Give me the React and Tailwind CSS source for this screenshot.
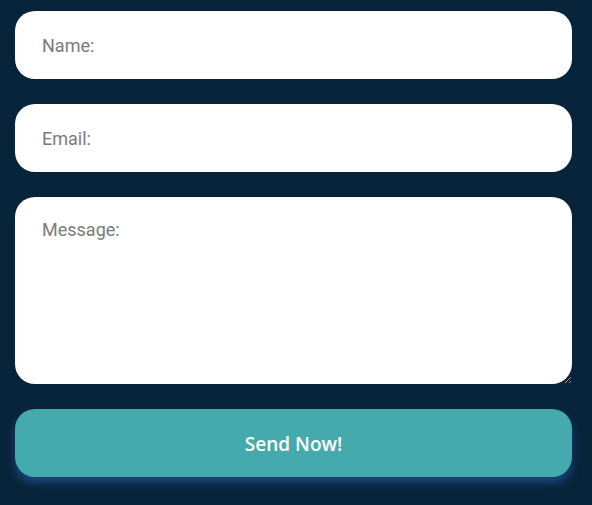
export default function App() {
  return (
    <div className="min-h-[505px] w-full bg-[#08243a] pl-[15px] pr-[20px] pt-[11px] pb-[28px]" style={{ fontFamily: 'Roboto, "Liberation Sans", sans-serif' }}>
      <form className="flex flex-col gap-[25px]" onSubmit={(e) => e.preventDefault()}>
        <input
          type="text"
          placeholder="Name:"
          className="h-[68px] w-full rounded-[20px] bg-white pl-[27px] pr-4 text-[18px] text-gray-700 placeholder:text-[#7a7a7a] outline-none"
        />
        <input
          type="email"
          placeholder="Email:"
          className="h-[68px] w-full rounded-[20px] bg-white pl-[27px] pr-4 text-[18px] text-gray-700 placeholder:text-[#7a7a7a] outline-none"
        />
        <textarea
          placeholder="Message:"
          className="block h-[187px] w-full rounded-[20px] bg-white pl-[27px] pr-4 pt-[21px] text-[18px] leading-[24px] text-gray-700 placeholder:text-[#7a7a7a] outline-none"
        />
        <button
          type="submit"
          className="h-[68px] w-full rounded-[20px] bg-[#45aaae] pt-[3px] text-[19px] font-semibold text-white shadow-[0_6px_8px_rgba(30,80,140,0.8)]"
          style={{ fontFamily: '"Open Sans", "Noto Sans", sans-serif' }}
        >
          Send Now!
        </button>
      </form>
    </div>
  );
}
